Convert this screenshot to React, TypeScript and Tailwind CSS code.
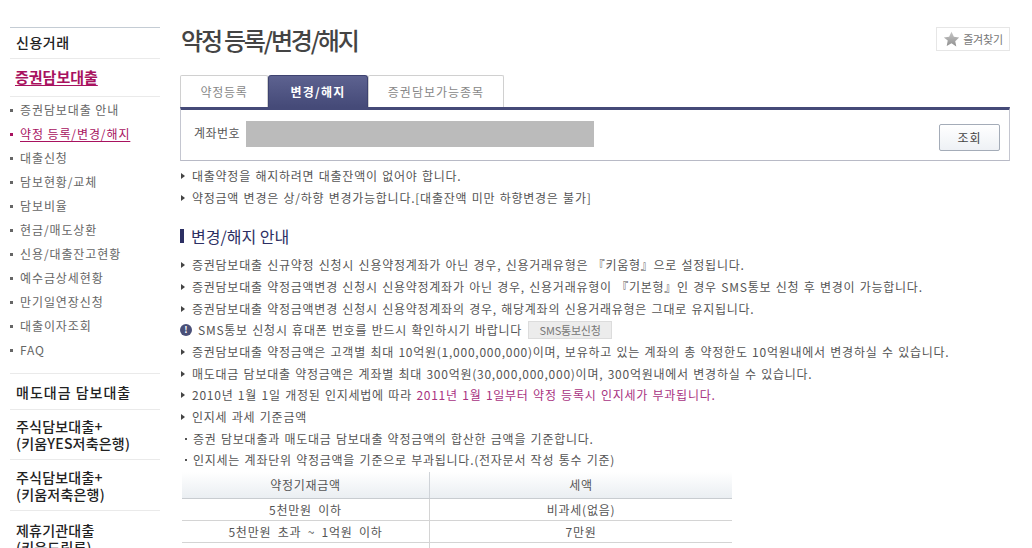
const menu = [
  "증권담보대출 안내",
  "약정 등록/변경/해지",
  "대출신청",
  "담보현황/교체",
  "담보비율",
  "현금/매도상환",
  "신용/대출잔고현황",
  "예수금상세현황",
  "만기일연장신청",
  "대출이자조회",
  "FAQ",
];

const font = { fontFamily: '"Noto Sans CJK KR", "Liberation Sans", sans-serif' };

function Arrow() {
  return <span className="w-0 h-0 border-y-[3px] border-y-transparent border-l-[4px] border-l-[#444] mr-[7px] ml-[1px] shrink-0" />;
}

function Note({ children }: { children: React.ReactNode }) {
  return (
    <div className="flex items-center h-[21.7px] text-[12px] tracking-[0.75px] text-[#555] whitespace-nowrap [word-spacing:1px]">
      <Arrow />
      <span>{children}</span>
    </div>
  );
}

function Dot({ children }: { children: React.ReactNode }) {
  return (
    <div className="flex items-center h-[21.7px] text-[12px] tracking-[0.75px] text-[#555] whitespace-nowrap [word-spacing:1px]">
      <span className="w-[2px] h-[2px] bg-[#555] ml-[5px] mr-[6px] shrink-0" />
      <span>{children}</span>
    </div>
  );
}

export default function App() {
  return (
    <div style={font} className="w-[1032px] h-[548px] overflow-hidden bg-white flex">
      {/* left menu */}
      <div className="w-[150px] ml-[10px] pt-[27px] shrink-0">
        <div className="border-t border-[#c4ccd4] h-[31px] pb-[2px] flex items-center pl-[6px] text-[14px] tracking-[0.5px] font-medium text-[#222]">신용거래</div>
        <div className="border-t border-[#eaeaea] h-[38px] flex items-center pl-[5px] text-[15px] font-bold text-[#a8125f] underline underline-offset-[2px]">증권담보대출</div>
        <div className="border-t border-[#eaeaea] pt-[1px] pb-[11px]">
          {menu.map((m, i) => (
            <div key={m} className="flex items-center h-[24px] text-[12px] tracking-[0.9px] text-[#666]">
              <span className={`w-[3px] h-[3px] ml-[0px] mr-[7px] ${i === 1 ? "bg-[#a8125f]" : "bg-[#666]"}`} />
              <span className={i === 1 ? "text-[#a8125f] underline underline-offset-[2px]" : ""}>{m}</span>
            </div>
          ))}
        </div>
        <div className="border-t border-[#eaeaea] h-[36px] pt-[1px] flex items-center pl-[6px] text-[14px] tracking-[1px] font-medium text-[#222]">매도대금 담보대출</div>
        <div className="border-t border-[#eaeaea] h-[50px] pt-[1px] flex items-center pl-[6px] text-[14px] tracking-[0.2px] leading-[17px] font-medium text-[#222]">
          <div>주식담보대출+<br />(키움YES저축은행)</div>
        </div>
        <div className="border-t border-[#eaeaea] h-[51px] pt-[1px] flex items-center pl-[6px] text-[14px] tracking-[0.2px] leading-[17px] font-medium text-[#222]">
          <div>주식담보대출+<br />(키움저축은행)</div>
        </div>
        <div className="border-t border-[#eaeaea] pt-[11px] pl-[6px] text-[14px] tracking-[0.2px] leading-[17px] font-medium text-[#222]">
          <div>제휴기관대출<br />(키움드림론)</div>
        </div>
      </div>

      {/* content */}
      <div className="w-[830px] ml-[20px] shrink-0">
        <div className="h-[75px] flex justify-between items-start">
          <h1 className="text-[24px] leading-[32px] mt-[24px] ml-[1px] font-medium tracking-[-2.2px] text-[#444]">약정 등록/변경/해지</h1>
          <div className="mt-[27px] w-[74px] h-[24px] border border-[#e6e6e6] flex items-center justify-center gap-[3px] text-[11px] tracking-[-0.2px] text-[#777]">
            <svg width="17" height="16" viewBox="0 0 24 23">
              <defs>
                <linearGradient id="star" x1="0" y1="0" x2="0" y2="1">
                  <stop offset="0" stopColor="#c8c8c8" />
                  <stop offset="1" stopColor="#8e8e8e" />
                </linearGradient>
              </defs>
              <path d="M12 1l3.4 7.2 7.6 1-5.6 5.4 1.5 7.8L12 17.6l-6.9 3.8 1.5-7.8L1 9.2l7.6-1z" fill="url(#star)" />
            </svg>
            즐겨찾기
          </div>
        </div>

        {/* tabs */}
        <div className="flex h-[32px] items-stretch text-[12px] tracking-[0.7px]">
          <div className="w-[88px] border border-b-0 border-[#d0d0d0] rounded-t-[2px] flex items-center justify-center text-[#888]">약정등록</div>
          <div className="w-[100px] bg-gradient-to-b from-[#5d6290] to-[#454a78] border border-b-0 border-[#3e4370] rounded-t-[3px] flex items-center justify-center text-white font-bold tracking-[1.2px]">변경/해지</div>
          <div className="w-[136px] border border-b-0 border-[#d0d0d0] rounded-t-[2px] flex items-center justify-center text-[#888] tracking-[1px]">증권담보가능종목</div>
        </div>
        <div className="h-[54px] border-t-[3px] border-t-[#454a78] border-x border-b border-x-[#c4c6d0] border-b-[#b8bac6] flex items-start">
          <span className="ml-[13px] mt-[14px] w-[52px] text-[12px] leading-[18px] tracking-[0.5px] text-[#555] whitespace-nowrap">계좌번호</span>
          <div className="mt-[11px] w-[348px] h-[26px] bg-[#bbbbbb]" />
          <div className="ml-auto mr-[9px] mt-[14px] w-[61px] h-[27px] border border-[#a4acb8] rounded-[2px] bg-gradient-to-b from-white to-[#eef1f5] flex items-center justify-center text-[12px] tracking-[1px] text-[#444]">조회</div>
        </div>

        <div className="mt-[4px]">
          <Note>대출약정을 해지하려면 대출잔액이 없어야 합니다.</Note>
          <Note>약정금액 변경은 상/하향 변경가능합니다.[대출잔액 미만 하향변경은 불가]</Note>
        </div>

        <div className="flex items-center h-[22px] mt-[17px] text-[16px] text-[#2c2f63]">
          <span className="w-[4px] h-[14px] bg-[#2c2f63] mr-[7px] ml-[0px]" />
          변경/해지 안내
        </div>

        <div className="mt-[7px]">
          <Note>증권담보대출 신규약정 신청시 신용약정계좌가 아닌 경우, 신용거래유형은 『키움형』으로 설정됩니다.</Note>
          <Note>증권담보대출 약정금액변경 신청시 신용약정계좌가 아닌 경우, 신용거래유형이 『기본형』인 경우 SMS통보 신청 후 변경이 가능합니다.</Note>
          <Note>증권담보대출 약정금액변경 신청시 신용약정계좌의 경우, 해당계좌의 신용거래유형은 그대로 유지됩니다.</Note>
          <div className="flex items-center h-[21.7px] text-[12px] tracking-[0.75px] text-[#555] whitespace-nowrap [word-spacing:1px]">
            <span className="w-[12px] h-[12px] rounded-full bg-[#4a5078] text-white text-[9px] leading-[12px] font-bold text-center mr-[6px] shrink-0 tracking-normal">!</span>
            SMS통보 신청시 휴대폰 번호를 반드시 확인하시기 바랍니다
            <span className="ml-[6px] w-[84px] h-[18px] bg-[#ececec] border border-[#dcdcdc] flex items-center justify-center text-[11px] tracking-[-0.2px] text-[#777]">SMS통보신청</span>
          </div>
          <Note>증권담보대출 약정금액은 고객별 최대 10억원(1,000,000,000)이며, 보유하고 있는 계좌의 총 약정한도 10억원내에서 변경하실 수 있습니다.</Note>
          <Note>매도대금 담보대출 약정금액은 계좌별 최대 300억원(30,000,000,000)이며, 300억원내에서 변경하실 수 있습니다.</Note>
          <Note>
            2010년 1월 1일 개정된 인지세법에 따라 <span className="text-[#a8327f]">2011년 1월 1일부터 약정 등록시 인지세가 부과됩니다.</span>
          </Note>
          <Note>인지세 과세 기준금액</Note>
          <Dot>증권 담보대출과 매도대금 담보대출 약정금액의 합산한 금액을 기준합니다.</Dot>
          <Dot>인지세는 계좌단위 약정금액을 기준으로 부과됩니다.(전자문서 작성 통수 기준)</Dot>
        </div>

        <div className="ml-[2px] mt-[1px] w-[550px] text-[12px] tracking-[0.75px] [word-spacing:3px] text-[#555]">
          <div className="grid grid-cols-[248px_1fr] h-[27px] bg-gradient-to-b from-white to-[#eaeef2] border-b border-[#c8ccd0] items-center text-center">
            <div className="h-full flex items-center justify-center border-r border-[#cfd3d8]">약정기재금액</div>
            <div>세액</div>
          </div>
          <div className="grid grid-cols-[248px_1fr] h-[22px] border-b border-[#d4d4d4] items-center text-center">
            <div className="h-full flex items-center justify-center border-r border-[#d4d4d4]">5천만원 이하</div>
            <div>비과세(없음)</div>
          </div>
          <div className="grid grid-cols-[248px_1fr] h-[22px] border-b border-[#d4d4d4] items-center text-center">
            <div className="h-full flex items-center justify-center border-r border-[#d4d4d4]">5천만원 초과 ~ 1억원 이하</div>
            <div>7만원</div>
          </div>
          <div className="grid grid-cols-[248px_1fr] h-[22px]">
            <div className="h-full border-r border-[#d4d4d4]" />
            <div />
          </div>
        </div>
      </div>
    </div>
  );
}
